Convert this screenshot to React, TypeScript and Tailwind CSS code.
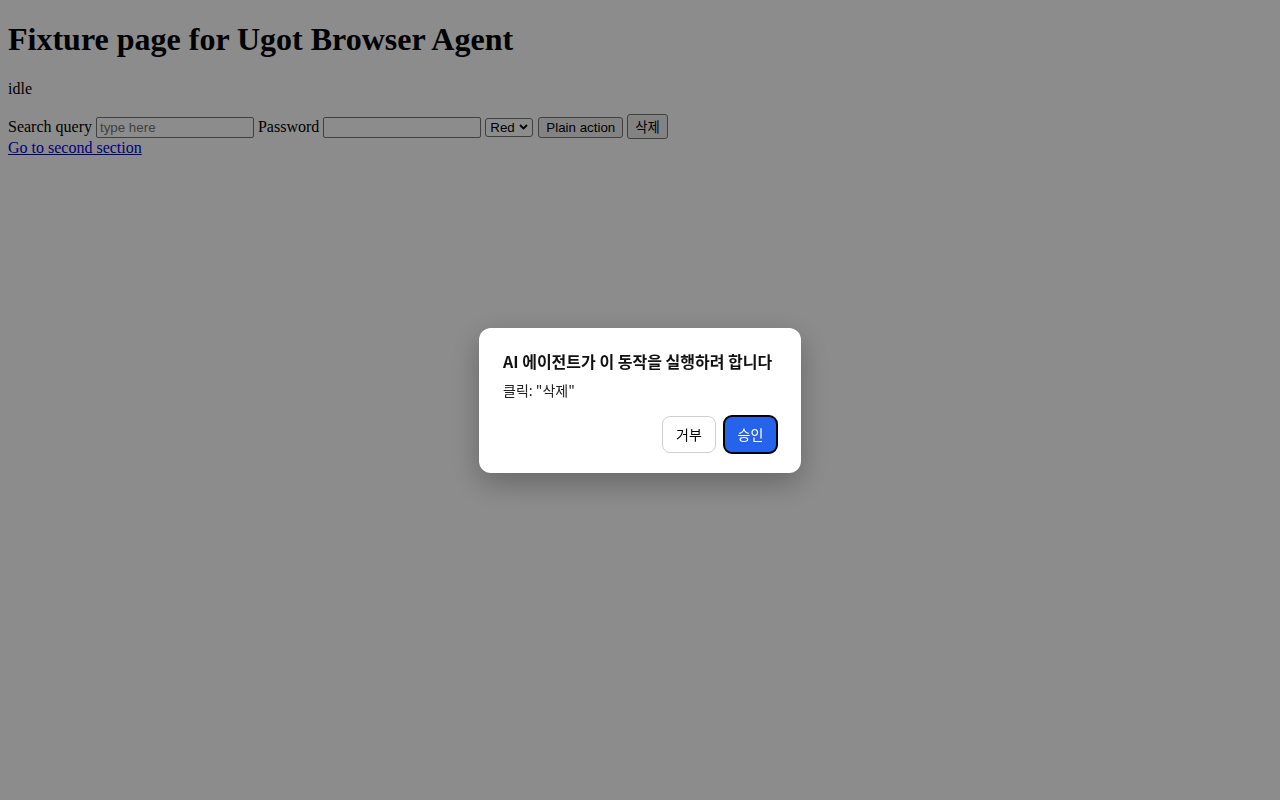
import { useState } from "react";

// Fixture page with the agent approval dialog laid over it.

const control =
  "font-['Liberation_Sans','Noto_Sans_CJK_KR',sans-serif] text-[13.333px] leading-[normal] text-black";

function ApprovalDialog({ action }: { action: string }) {
  return (
    <div className="fixed inset-0 flex items-center justify-center bg-black/45">
      <div
        role="dialog"
        aria-modal="true"
        className="w-[322px] rounded-xl bg-white px-6 pt-[21px] pb-5 shadow-[0_10px_30px_rgba(0,0,0,0.28)] font-['Noto_Sans_CJK_KR','Noto_Sans',sans-serif] leading-[normal] text-[#111]"
      >
        <h2 className="mb-[7px] whitespace-nowrap text-[16px] font-bold">
          AI 에이전트가 이 동작을 실행하려 합니다
        </h2>
        <p className="text-[14px] text-[#222]">클릭: "{action}"</p>
        <div className="mt-4 flex justify-end gap-2">
          <button
            type="button"
            className="flex h-[37px] w-[54px] items-center justify-center rounded-lg border border-[#d0d0d0] bg-white text-[14px] text-black"
          >
            거부
          </button>
          <button
            type="button"
            className="flex h-[37px] w-[53px] items-center justify-center rounded-lg border border-[#2563eb] bg-[#2563eb] text-[14px] text-white outline-2 outline-offset-[-1px] outline-black"
          >
            승인
          </button>
        </div>
      </div>
    </div>
  );
}

export default function App() {
  const [status] = useState("idle");

  return (
    <div className="min-h-[800px] bg-white p-2 font-['Liberation_Serif',serif] text-[16px] leading-[normal] text-black">
      <h1 className="mt-[13.44px] mb-[21.44px] text-[32px] font-bold">
        Fixture page for Ugot Browser Agent
      </h1>
      <p className="mb-4">{status}</p>
      <div>
        <label>
          Search query{" "}
          <input
            type="text"
            placeholder="type here"
            className={`${control} w-[158px] rounded-[2px] border border-[#767676] bg-white px-[3px] py-[2px] placeholder:text-[#757575]`}
          />
        </label>{" "}
        <label>
          Password{" "}
          <input
            type="password"
            className={`${control} w-[158px] rounded-[2px] border border-[#767676] bg-white px-[3px] py-[2px]`}
          />
        </label>{" "}
        <span className="relative inline-block">
          <select
            defaultValue="red"
            className={`${control} w-[48px] appearance-none rounded-[3px] border border-[#767676] bg-white py-[1px] pr-[16px] pl-[4px]`}
          >
            <option value="red">Red</option>
            <option value="green">Green</option>
            <option value="blue">Blue</option>
          </select>
          <svg
            className="pointer-events-none absolute top-1/2 right-[5px] -translate-y-1/2"
            width="9"
            height="6"
            viewBox="0 0 9 6"
            fill="none"
            aria-hidden
          >
            <path d="M1 1l3.5 3.5L8 1" stroke="#000" strokeWidth="1.8" />
          </svg>
        </span>{" "}
        <button
          type="button"
          className={`${control} ml-px rounded-[3px] border border-[#767676] bg-[#efefef] px-[7px] py-[2px]`}
        >
          Plain action
        </button>{" "}
        <button
          type="button"
          className={`${control} rounded-[3px] border border-[#767676] bg-[#efefef] px-[7px] py-[2px]`}
        >
          삭제
        </button>
        <br />
        <a href="#second" className="text-[#0000ee] underline">
          Go to second section
        </a>
      </div>
      <ApprovalDialog action="삭제" />
    </div>
  );
}
